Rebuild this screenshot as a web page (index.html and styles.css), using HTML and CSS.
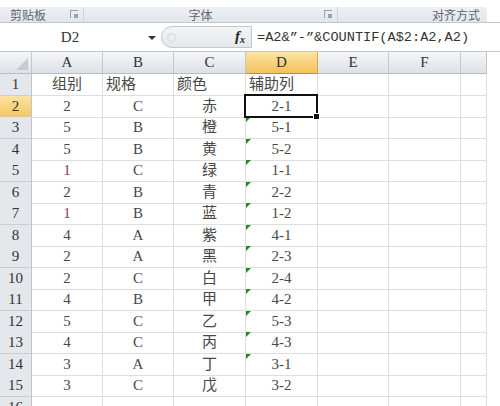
FILE: index.html
```html
<!DOCTYPE html>
<html>
<head>
<meta charset="utf-8">
<link rel="stylesheet" href="styles.css">
</head>
<body>
<div class="app">
  <div class="ribbon">
    <div class="strip">
      <div class="group g1"><span class="glabel">剪贴板</span><span class="launch"></span></div>
      <div class="group g2"><span class="glabel">字体</span><span class="launch"></span></div>
      <div class="group g3"><span class="glabel">对齐方式</span></div>
    </div>
  </div>
  <div class="fbar">
    <div class="namebox"><span class="nbtext">D2</span><span class="arrow"></span></div>
    <div class="pill"><span class="dot"></span><span class="fx">f<sub>x</sub></span></div>
    <div class="formula">=A2&amp;”-”&amp;COUNTIF(A$2:A2,A2)</div>
  </div>
  <div class="sheet">
    <div class="row hdr">
      <div class="c corner"></div><div class="c ch">A</div><div class="c ch">B</div><div class="c ch">C</div><div class="c ch sel">D</div><div class="c ch">E</div><div class="c ch">F</div><div class="c ch"></div>
    </div>
    <div class="row">
      <div class="c rh">1</div><div class="c mid">组别</div><div class="c left">规格</div><div class="c left">颜色</div><div class="c left">辅助列</div><div class="c"></div><div class="c"></div><div class="c"></div>
    </div>
    <div class="row">
      <div class="c rh sel">2</div><div class="c mid">2</div><div class="c mid">C</div><div class="c mid">赤</div><div class="c mid active">2-1</div><div class="c"></div><div class="c"></div><div class="c"></div>
    </div>
    <div class="row">
      <div class="c rh">3</div><div class="c mid">5</div><div class="c mid">B</div><div class="c mid">橙</div><div class="c mid flag">5-1</div><div class="c"></div><div class="c"></div><div class="c"></div>
    </div>
    <div class="row">
      <div class="c rh">4</div><div class="c mid">5</div><div class="c mid">B</div><div class="c mid">黄</div><div class="c mid flag">5-2</div><div class="c"></div><div class="c"></div><div class="c"></div>
    </div>
    <div class="row">
      <div class="c rh">5</div><div class="c mid red">1</div><div class="c mid">C</div><div class="c mid">绿</div><div class="c mid flag">1-1</div><div class="c"></div><div class="c"></div><div class="c"></div>
    </div>
    <div class="row">
      <div class="c rh">6</div><div class="c mid">2</div><div class="c mid">B</div><div class="c mid">青</div><div class="c mid flag">2-2</div><div class="c"></div><div class="c"></div><div class="c"></div>
    </div>
    <div class="row">
      <div class="c rh">7</div><div class="c mid red">1</div><div class="c mid">B</div><div class="c mid">蓝</div><div class="c mid flag">1-2</div><div class="c"></div><div class="c"></div><div class="c"></div>
    </div>
    <div class="row">
      <div class="c rh">8</div><div class="c mid">4</div><div class="c mid">A</div><div class="c mid">紫</div><div class="c mid flag">4-1</div><div class="c"></div><div class="c"></div><div class="c"></div>
    </div>
    <div class="row">
      <div class="c rh">9</div><div class="c mid">2</div><div class="c mid">A</div><div class="c mid">黑</div><div class="c mid flag">2-3</div><div class="c"></div><div class="c"></div><div class="c"></div>
    </div>
    <div class="row">
      <div class="c rh">10</div><div class="c mid">2</div><div class="c mid">C</div><div class="c mid">白</div><div class="c mid flag">2-4</div><div class="c"></div><div class="c"></div><div class="c"></div>
    </div>
    <div class="row">
      <div class="c rh">11</div><div class="c mid">4</div><div class="c mid">B</div><div class="c mid">甲</div><div class="c mid flag">4-2</div><div class="c"></div><div class="c"></div><div class="c"></div>
    </div>
    <div class="row">
      <div class="c rh">12</div><div class="c mid">5</div><div class="c mid">C</div><div class="c mid">乙</div><div class="c mid flag">5-3</div><div class="c"></div><div class="c"></div><div class="c"></div>
    </div>
    <div class="row">
      <div class="c rh">13</div><div class="c mid">4</div><div class="c mid">C</div><div class="c mid">丙</div><div class="c mid flag">4-3</div><div class="c"></div><div class="c"></div><div class="c"></div>
    </div>
    <div class="row">
      <div class="c rh">14</div><div class="c mid">3</div><div class="c mid">A</div><div class="c mid">丁</div><div class="c mid flag">3-1</div><div class="c"></div><div class="c"></div><div class="c"></div>
    </div>
    <div class="row">
      <div class="c rh">15</div><div class="c mid">3</div><div class="c mid">C</div><div class="c mid">戊</div><div class="c mid">3-2</div><div class="c"></div><div class="c"></div><div class="c"></div>
    </div>
    <div class="row">
      <div class="c rh">16</div><div class="c"></div><div class="c"></div><div class="c"></div><div class="c"></div><div class="c"></div><div class="c"></div><div class="c"></div>
    </div>
  </div>
</div>
</body>
</html>
```

FILE: styles.css
```css
* { box-sizing: border-box; }
html, body { margin: 0; padding: 0; background: #fff; }
body { width: 500px; height: 406px; overflow: hidden; font-family: "Liberation Serif", "Noto Sans CJK SC", serif; color: #484848; }
.app { width: 500px; }

.ribbon { height: 23px; padding-top: 7px; border-bottom: 1px solid #c3c8cf; }
.strip { width: 487px; height: 15px; display: flex; background: linear-gradient(#edf0f4, #e2e6eb); border-top-right-radius: 3px; }
.group { position: relative; display: flex; align-items: center; height: 15px; border-right: 1px solid #cdd2d8; }
.g1 { width: 84px; padding-left: 10px; }
.g2 { width: 254px; justify-content: center; padding-right: 20px; }
.g3 { flex: 1; justify-content: flex-end; padding-right: 7px; border-right: none; }
.glabel { font-family: "Noto Sans CJK SC", sans-serif; font-size: 12px; color: #5f6670; line-height: 15px; }
.launch { position: absolute; right: 5px; top: 3px; width: 8px; height: 8px; border-top: 1px solid #9aa1aa; border-left: 1px solid #9aa1aa; }
.launch::after { content: ""; position: absolute; right: 0; bottom: 0; width: 4px; height: 4px; background: #9aa1aa; }

.fbar { height: 29px; display: flex; align-items: center; border-bottom: 1px solid #c3c8cf; }
.namebox { width: 161px; height: 100%; display: flex; align-items: center; position: relative; }
.nbtext { width: 140px; text-align: center; font-size: 15px; color: #333; }
.arrow { position: absolute; left: 148px; top: 13px; width: 0; height: 0; border-left: 4px solid transparent; border-right: 4px solid transparent; border-top: 4px solid #333; }
.pill { width: 91px; height: 22px; display: flex; align-items: center; justify-content: space-between; padding: 0 6px 0 5px; background: linear-gradient(#f4f5f7, #e4e7eb); border: 1px solid #c2c7ce; border-radius: 11px 0 0 11px; }
.dot { width: 9px; height: 9px; border-radius: 50%; border: 1px solid #d3d6db; background: #eceef1; }
.fx { font-family: "Liberation Serif", serif; font-style: italic; font-weight: bold; font-size: 15px; color: #222; line-height: 1; }
.fx sub { font-size: 10px; vertical-align: -2px; }
.formula { flex: 0 0 235px; padding-left: 5px; font-family: "Liberation Mono", "Noto Sans CJK SC", monospace; font-size: 13.6px; color: #333; white-space: nowrap; }

.sheet { width: 487px; }
.row { display: grid; grid-template-columns: 32px 71px 71px 72px 72px 71px 72px 26px; height: 21.5px; }
.row.hdr { height: 22px; }
.c { position: relative; border-right: 1px solid #dcdee0; border-bottom: 1px solid #dcdee0; font-size: 15px; line-height: 21px; white-space: nowrap; overflow: visible; }
.mid { text-align: center; }
.left { text-align: left; padding-left: 3px; }
.red { color: #8a3566; }

.ch { background: linear-gradient(#f5f6f8, #dde1e6); border-right-color: #c3c8ce; border-bottom-color: #b8bec6; text-align: center; font-size: 15px; line-height: 21px; color: #333; }
.ch.sel { background: linear-gradient(#fbe4a4, #f3c25d); border-right-color: #d9a642; border-bottom-color: #c28f2f; }
.corner { background: linear-gradient(#f5f6f8, #dde1e6); border-right-color: #c3c8ce; border-bottom-color: #b8bec6; }
.corner::after { content: ""; position: absolute; right: 3px; bottom: 3px; width: 0; height: 0; border-left: 12px solid transparent; border-bottom: 12px solid #c8ccd2; }
.rh { background: #e4e7ec; border-right-color: #c0c5cc; border-bottom-color: #c9ced4; text-align: center; font-size: 15px; color: #333; }
.rh.sel { background: linear-gradient(#fbe3a2, #f4c663); border-bottom-color: #d3a248; }

.flag::before { content: ""; position: absolute; left: 0; top: 0; width: 0; height: 0; border-top: 5px solid #1d8a25; border-right: 5px solid transparent; }
.active::after { content: ""; position: absolute; left: -2px; top: -2px; right: -1px; bottom: -1px; border: 2px solid #111; z-index: 2; }
.active::before { content: ""; position: absolute; right: -3px; bottom: -3px; width: 5px; height: 5px; background: #111; border: 1px solid #fff; z-index: 3; }
```
